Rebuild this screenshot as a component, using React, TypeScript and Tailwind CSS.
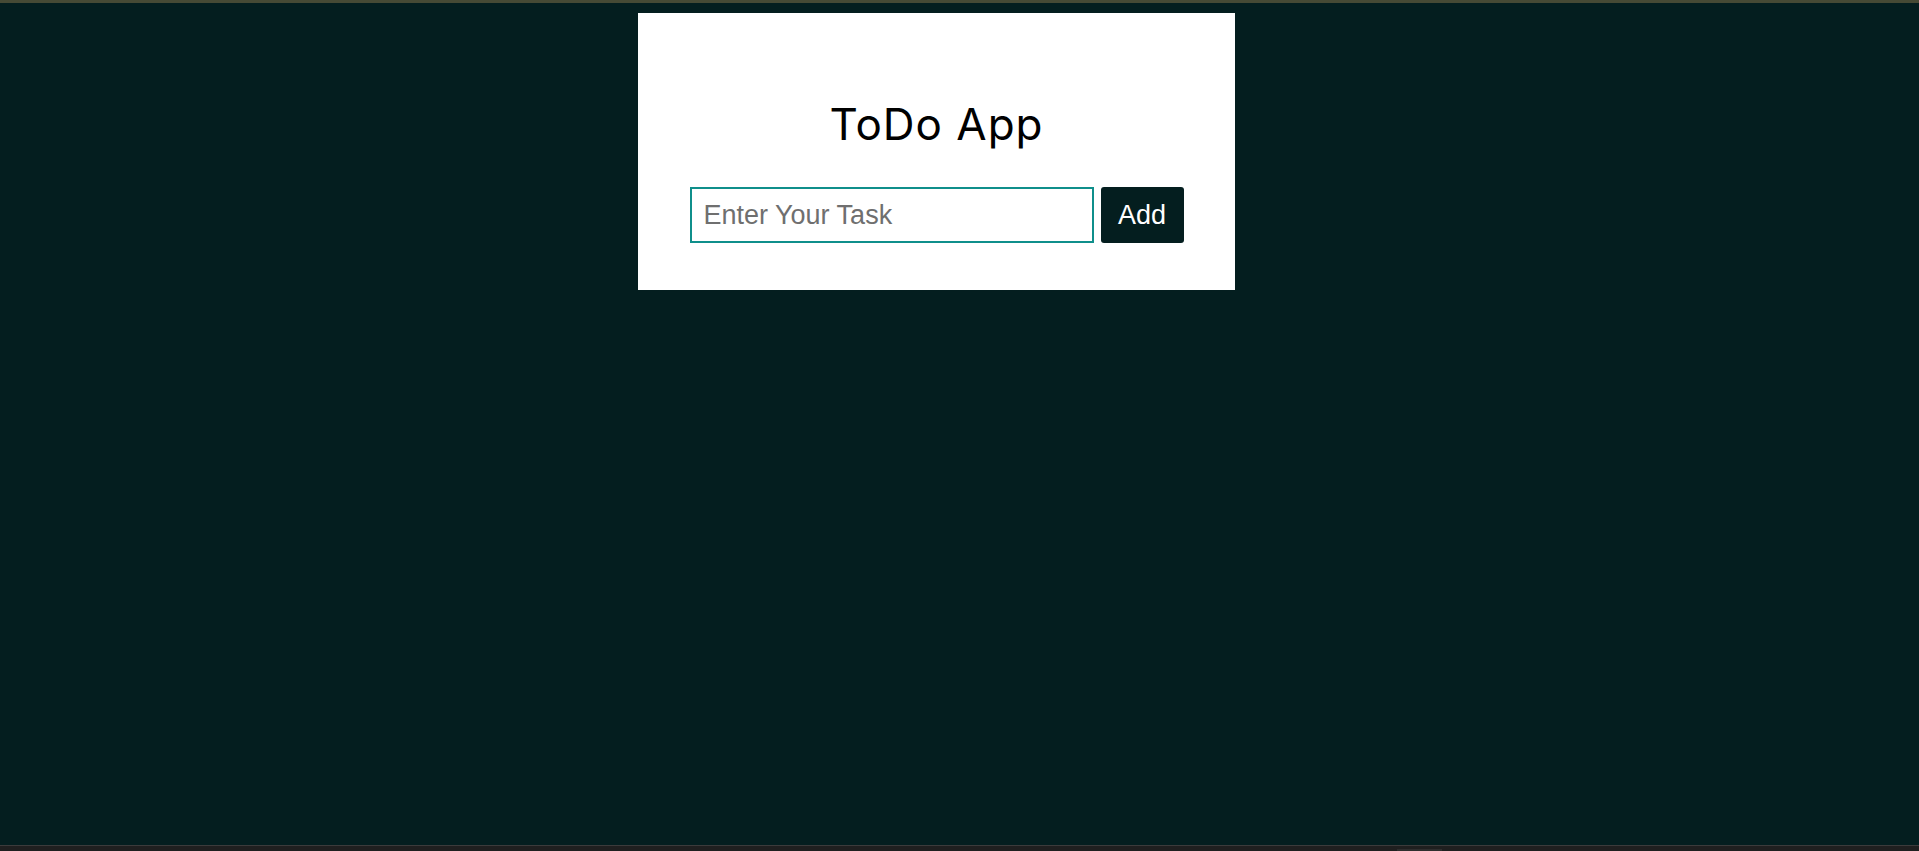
import React from "react";

export default function App() {
  return (
    <div className="w-[1919px] h-[851px] bg-[#041e1f] flex flex-col overflow-hidden">
      <div className="h-[3px] w-full bg-[#464a35] shrink-0" />
      <div className="flex-1">
        <div className="mt-[10px] ml-[638px] w-[597px] bg-white flex flex-col items-center pt-[85px] pb-[47px]">
          <h1
            className="text-[44px] leading-[53px] text-black tracking-[1px] mb-[36px]"
            style={{ fontFamily: "Inter, 'Noto Sans', sans-serif" }}
          >
            ToDo App
          </h1>
          <div className="flex gap-[7px] items-stretch" style={{ fontFamily: "'Liberation Sans', Arial, sans-serif" }}>
            <input
              type="text"
              placeholder="Enter Your Task"
              className="w-[404px] h-[56px] border-2 border-[#0f8f8b] pl-3 text-[27px] text-black placeholder:text-[#6f6f6f] outline-none bg-white"
              style={{ fontFamily: "'Liberation Sans', Arial, sans-serif" }}
            />
            <button
              className="w-[83px] h-[56px] bg-[#041e1f] text-white text-[27px] rounded-[3px]"
              style={{ fontFamily: "'Liberation Sans', Arial, sans-serif" }}
            >
              Add
            </button>
          </div>
        </div>
      </div>
      <div className="h-[1px] w-full bg-[#3b3b3b] shrink-0" />
      <div className="h-[5px] w-full bg-[#1f1f1f] shrink-0 relative">
        <div className="absolute left-[1397px] top-[3px] w-[45px] h-[2px] bg-[#2e2e2e]" />
      </div>
    </div>
  );
}
